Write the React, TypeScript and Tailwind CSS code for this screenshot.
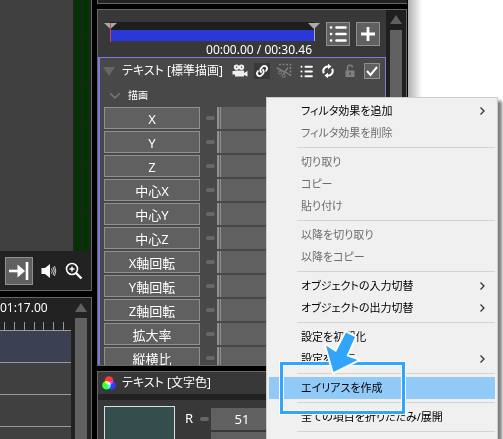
import React from "react";
import { FaLink } from "react-icons/fa";

const font = "font-['Noto_Sans','Noto_Sans_CJK_JP',sans-serif]";

const params = ["X", "Y", "Z", "中心X", "中心Y", "中心Z", "X軸回転", "Y軸回転", "Z軸回転", "拡大率", "縦横比"];

interface MenuEntry {
  label: string;
  disabled?: boolean;
  submenu?: boolean;
  active?: boolean;
}

const menuGroups: MenuEntry[][] = [
  [
    { label: "フィルタ効果を追加", submenu: true },
    { label: "フィルタ効果を削除", disabled: true },
  ],
  [
    { label: "切り取り", disabled: true },
    { label: "コピー", disabled: true },
    { label: "貼り付け", disabled: true },
  ],
  [
    { label: "以降を切り取り", disabled: true },
    { label: "以降をコピー", disabled: true },
  ],
  [
    { label: "オブジェクトの入力切替", submenu: true },
    { label: "オブジェクトの出力切替", submenu: true },
  ],
  [{ label: "設定を初期化" }, { label: "設定を保存", submenu: true }],
  [{ label: "エイリアスを作成", active: true }],
  [{ label: "全ての項目を折りたたみ/展開" }],
  [],
];

function ScrollUp() {
  return (
    <svg className="h-[9px] w-3 shrink-0" viewBox="0 0 12 9" fill="#606060">
      <path d="M6 0 12 9H0z" />
    </svg>
  );
}

function ListIcon({ className }: { className: string }) {
  return (
    <svg className={className} viewBox="0 0 18 18" stroke="#fff" strokeWidth="2.6" strokeLinecap="round">
      <path d="M2 2.5h.1M2 9h.1M2 15.5h.1M7.5 2.5h9M7.5 9h9M7.5 15.5h9" />
    </svg>
  );
}

function Preview() {
  return (
    <section className="flex h-[291px] shrink-0 flex-col border-r border-b border-[#666] bg-[#222]">
      <div className="flex h-[251px] gap-0.5 pr-0.5">
        <div className="flex-1 bg-[#404040]" />
        {[0, 1].map((bar) => (
          <div key={bar} className="flex w-1.5 flex-col gap-px">
            <div className="h-[38px] bg-[#003500]" />
            <div className="h-[41px] bg-[#003500]" />
            <div className="h-[42px] bg-[#003500]" />
            <div className="h-[42px] bg-[#003500]" />
            <div className="h-[41px] bg-[#003500]" />
            <div className="flex-1 bg-[#003500]" />
          </div>
        ))}
      </div>
      <div className="flex flex-1 items-center gap-2 pl-[5px]">
        <button aria-label="末尾へ移動" className="flex size-7 items-center justify-center border border-[#909090] bg-[#606060]">
          <svg className="h-5 w-5" viewBox="0 0 20 20" stroke="#fff" fill="#fff">
            <path d="M0 10h10" strokeWidth="2.6" />
            <path d="M8.5 3.5 16 10l-7.5 6.5z" stroke="none" />
            <path d="M18 1v18" strokeWidth="2.6" />
          </svg>
        </button>
        <button aria-label="音量">
          <svg className="h-4 w-4" viewBox="0 0 16 16" fill="#fff">
            <path d="M.5 5H4l5-4v14l-5-4H.5z" />
            <path d="M10.5 5.5q1.6 2.500 0 5M12 4q2.600 4 0 8M13.500 3q2.600 5 0 10" fill="none" stroke="#ccc" />
          </svg>
        </button>
        <button aria-label="拡大">
          <svg className="size-[18px]" viewBox="0 0 18 18" fill="none" stroke="#fff">
            <circle cx="7" cy="7" r="5.5" strokeWidth="1.6" />
            <path d="M4.5 7h5M7 4.5v5" strokeWidth="1.4" />
            <path d="m11 11 5.5 5.5" strokeWidth="2.4" />
          </svg>
        </button>
      </div>
    </section>
  );
}

function Timeline() {
  return (
    <section className="flex min-h-0 flex-1 gap-1 border-t border-r border-[#666] bg-[#222] pr-1">
      <div className="flex-1 overflow-hidden">
        <p className="h-6 text-[12px] leading-5 text-white">01:17.00</p>
        <svg className="h-2 w-full" stroke="#999" shapeRendering="crispEdges">
          <path d="M4.5 0v8M14.5 0v8M24.5 0v8M34.5 0v8M43.5 0v8M53.5 0v8M63.5 0v8" />
        </svg>
        <div className="h-8 border-t border-[#999] bg-[#3c4053]" />
        <div className="h-8 border-t border-[#999] bg-[#404040]" />
        <div className="h-8 border-t border-[#999] bg-[#404040]" />
        <div className="h-8 border-t border-[#999] bg-[#404040]" />
      </div>
      <div className="flex w-3 flex-col gap-1.5 pt-[5px]">
        <ScrollUp />
        <div className="flex-1 bg-[#606060]" />
      </div>
    </section>
  );
}

function Seek() {
  return (
    <div className="flex h-12 items-start gap-1.5 pt-3 pr-1.5">
      <div className="flex-1">
        <svg className="h-5 w-full" viewBox="0 0 222 20" preserveAspectRatio="none">
          <path d="M12 0h205v8H12z" fill="#1e1e1e" />
          <path d="M12 8h204v11H12z" fill="#2a38d8" />
          <path d="M6 1h13l-6.5 6zM210 1h12l-6 6z" fill="#aaa" />
          <path d="M12.5 1v19" stroke="#c44" />
          <path d="M216.5 5v14" stroke="#aaa" />
        </svg>
        <p className="pr-2 text-right text-[12px] leading-[15px] text-white">00:00.00 / 00:30.46</p>
      </div>
      <button aria-label="一覧" className="flex size-6 items-center justify-center border border-[#909090] bg-[#606060]">
        <ListIcon className="size-[18px]" />
      </button>
      <button aria-label="追加" className="flex size-6 items-center justify-center border border-[#909090] bg-[#606060]">
        <svg className="size-3.5" viewBox="0 0 14 14" stroke="#fff" strokeWidth="2.8">
          <path d="M0 7h14M7 0v14" />
        </svg>
      </button>
    </div>
  );
}

function FilterHeader() {
  return (
    <div className="flex h-[26px] items-center pr-[5px] pl-[3px] text-white">
      <svg className="h-[9px] w-3" viewBox="0 0 12 9" fill="#666">
        <path d="M0 0h12L6 9z" />
      </svg>
      <h2 className="flex-1 pl-[7px] text-[12px] whitespace-nowrap">テキスト [標準描画]</h2>
      <div className="flex items-center gap-1.5">
        <svg className="size-4" viewBox="0 0 16 16" fill="#eee">
          <path d="M4.500 1.500a2.700 2.700 0 1 1 0 5.400 2.700 2.700 0 0 1 0-5.400zM9.500 1.500a2.700 2.700 0 1 1 0 5.400 2.700 2.700 0 0 1 0-5.400z" />
          <path d="M3 7.500h9v6H3zM12 10l3.500-2v5.500L12 12zM.5 8H3v3.500H.5z" />
          <path d="M4 4.200h1.200M9 4.200h1.200" stroke="#484848" strokeWidth="1.200" />
        </svg>
        <span className="flex size-4 items-center justify-center bg-[#383838]">
          <FaLink className="size-3" />
        </span>
        <svg className="size-4" viewBox="0 0 16 16" fill="none" stroke="#808080">
          <path d="M3 1.500h11.500v12" strokeWidth="1.500" strokeDasharray="2 1.500" />
          <path d="m1 5 9 4.500L14 12M12 4.500 7.500 11" strokeWidth="1.400" />
          <circle cx="4" cy="9.500" r="1.600" />
          <circle cx="7.500" cy="12.800" r="1.600" />
        </svg>
        <span className="flex size-4 items-center justify-center">
          <ListIcon className="size-[13px]" />
        </span>
        <svg className="size-4" viewBox="0 0 16 16" fill="none" stroke="#fff" strokeWidth="2">
          <path d="M3.900 10.200A4.500 4.500 0 0 1 8.500 3.500M12.100 5.800A4.500 4.500 0 0 1 7.500 12.500" />
          <path d="M8 .8v5.400l3.500-2.700zM8 9.800v5.400l-3.500-2.700z" fill="#fff" stroke="none" />
        </svg>
        <svg className="size-4" viewBox="0 0 16 16" fill="none" stroke="#808080" strokeWidth="1.500">
          <path d="M5.500 8V5a2.500 2.500 0 0 1 5-.5" />
          <path d="M3.500 7.500h9V14h-9z" fill="#808080" stroke="none" />
          <path d="M8 9.500v2.500" stroke="#484848" />
        </svg>
        <label className="relative flex size-4">
          <input
            type="checkbox"
            defaultChecked
            aria-label="標準描画を有効にする"
            className="size-4 appearance-none border border-[#909090] bg-[#606060]"
          />
          <svg className="pointer-events-none absolute inset-0 size-4" viewBox="0 0 16 16" fill="none" stroke="#fff" strokeWidth="2">
            <path d="m3 8 3.500 4L13 4" />
          </svg>
        </label>
      </div>
    </div>
  );
}

function Settings() {
  return (
    <section className="flex h-[357px] shrink-0 overflow-hidden border border-[#666] bg-[#383838]">
      <div className="flex min-w-0 flex-1 flex-col">
        <Seek />
        <div className="flex-1 border-t border-r border-l-2 border-[#7b7bdd] bg-[#484848]">
          <FilterHeader />
          <h3 className="flex h-[23px] items-center gap-2 pl-[10px] text-[10px] text-white">
            <svg className="h-1.5 w-2.5" viewBox="0 0 10 6" fill="none" stroke="#777" strokeWidth="1.5">
              <path d="m0 0 5 5 5-5" />
            </svg>
            描画
          </h3>
          <div className="flex flex-col gap-0.5 pr-[5px] pl-1">
            {params.map((name) => (
              <div key={name} className="flex h-[22px] shrink-0 items-center">
                <button className="h-[22px] w-24 border border-[#909090] bg-[#606060] text-[13px] leading-[22px] text-white">
                  {name}
                </button>
                <span className="mr-0.5 ml-1.5 h-1 w-[9px] rounded-sm bg-[#666]" />
                <span className="h-full flex-1 border-l-2 border-[#909090] bg-[#606060] pl-px">
                  <span className="block h-full border-l border-[#909090]" />
                </span>
              </div>
            ))}
          </div>
        </div>
      </div>
      <div className="flex w-5 flex-col items-center gap-1.5 bg-[#1f1f1f] pt-[5px]">
        <ScrollUp />
        <div className="w-3 flex-1 bg-[#606060]" />
      </div>
    </section>
  );
}

function TextColor() {
  return (
    <section className="min-h-0 flex-1 overflow-hidden border-t border-l border-[#666] bg-[#383838] text-white">
      <h2 className="flex h-[22px] items-center gap-1.5 pl-1 text-[12px] leading-5">
        <svg className="size-3.5" viewBox="0 0 14 14">
          <circle cx="7" cy="4.500" r="4.300" fill="#f00" className="mix-blend-screen" />
          <circle cx="4.500" cy="9.300" r="4.300" fill="#0f0" className="mix-blend-screen" />
          <circle cx="9.500" cy="9.300" r="4.300" fill="#00f" className="mix-blend-screen" />
        </svg>
        テキスト [文字色]
      </h2>
      <div className="h-1.5 bg-[#222]" />
      <div className="flex pt-1.5 pl-1.5 text-[13px]">
        <div className="h-16 w-[71px] border border-[#ddd] bg-[#344d4d]" />
        <div className="flex flex-1 flex-col gap-0.5 pt-0.5 pl-2.5">
          <label className="flex h-[22px] items-center">
            <span className="w-[15px]">R</span>
            <span className="mr-0.5 h-1 w-[9px] rounded-sm bg-[#666]" />
            <input defaultValue="51" className="h-[22px] w-[62px] bg-[#606060] text-center" />
          </label>
          <input aria-label="緑" className="ml-[26px] h-[22px] w-[62px] bg-[#606060] text-center" />
        </div>
      </div>
    </section>
  );
}

function ContextMenu() {
  return (
    <nav
      aria-label="メニュー"
      className="absolute top-[97px] left-[266px] w-[232px] border border-[#ccc] bg-[#f0f0f0] p-0.5 pb-6 text-[11px] text-black shadow-[4px_4px_3px_rgba(0,0,0,0.5)]"
    >
      {menuGroups.map((group, i) => (
        <div key={i}>
          {i > 0 && <hr className="my-[3px] ml-7 border-[#d4d4d4]" />}
          {group.map((item) => (
            <button
              key={item.label}
              disabled={item.disabled}
              className={`flex h-[22px] w-full items-center justify-between pr-2.5 pl-8 ${
                item.active ? "bg-[#91c9f7]" : ""
              } ${item.disabled ? "text-[#6d6d6d]" : ""}`}
            >
              {item.label}
              {item.submenu && (
                <svg className="h-2 w-[5px]" viewBox="0 0 5 8" fill="none" stroke="#333" strokeWidth="1.3">
                  <path d="m.5.5 3.500 3.500L.5 7.500" />
                </svg>
              )}
            </button>
          ))}
        </div>
      ))}
    </nav>
  );
}

// highlight frame and arrow pointing at the alias entry
function Callout() {
  return (
    <svg className="pointer-events-none absolute top-[325px] left-[262px] h-[100px] w-[150px]" viewBox="0 0 150 100" fill="none">
      <path d="M19.500 38.500h122v49h-122z" stroke="#fff" strokeWidth="5" />
      <path d="M19.500 38.500h122v49h-122z" stroke="#30a5fa" strokeWidth="3" />
      <path
        d="M84 7.500 93 12 84.500 31 95.500 35 71.500 47 64 20.500 74 27z"
        fill="#30a5fa"
        stroke="#fff"
        strokeWidth="4"
        strokeLinejoin="round"
        paintOrder="stroke"
      />
    </svg>
  );
}

function App() {
  return (
    <main className={`relative flex h-screen overflow-hidden bg-white [font-feature-settings:'palt'] ${font}`}>
      <div className="flex w-[97px] shrink-0 flex-col gap-1.5 bg-black pr-[5px]">
        <Preview />
        <Timeline />
      </div>
      <div className="flex w-[311px] shrink-0 flex-col gap-[5px] bg-black pr-px">
        <div className="h-1 shrink-0 border-b border-l border-[#666] bg-[#222]" />
        <Settings />
        <TextColor />
      </div>
      <div className="flex-1 bg-linear-to-r from-[#b0b0b0] to-white to-15%" />
      <ContextMenu />
      <Callout />
    </main>
  );
}

export default App;
